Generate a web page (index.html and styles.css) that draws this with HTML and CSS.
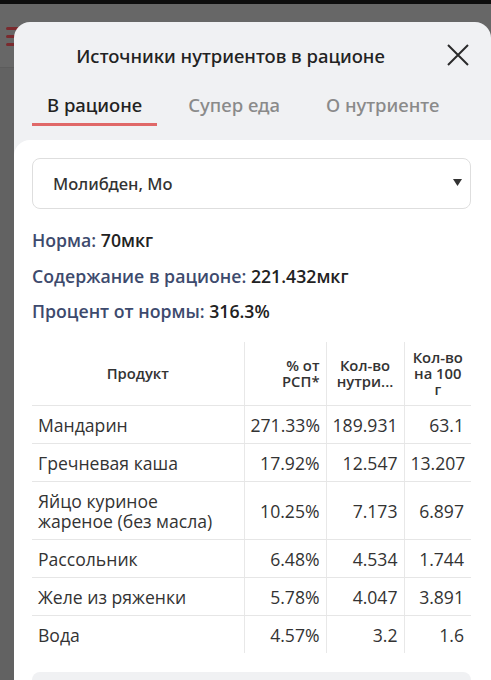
FILE: index.html
```
<!DOCTYPE html>
<html lang="ru">
<head>
<meta charset="utf-8">
<link rel="stylesheet" href="styles.css">
</head>
<body>
<div class="statusbar"></div>
<div class="page-header">
  <div class="burger"><span></span><span></span><span></span></div>
</div>
<div class="page-body"></div>

<div class="modal">
  <div class="modal-head">
    <div class="modal-title">Источники нутриентов в рационе</div>
    <div class="close">
      <svg width="22" height="22" viewBox="0 0 22 22"><path d="M1 1 L21 21 M21 1 L1 21" stroke="#2a2a2a" stroke-width="2" fill="none"/></svg>
    </div>
  </div>
  <div class="tabs">
    <div class="tab active">В рационе</div>
    <div class="tab">Супер еда</div>
    <div class="tab">О нутриенте</div>
  </div>
  <div class="card">
    <div class="select">
      <span>Молибден, Мо</span>
      <svg class="arrow" width="9" height="7" viewBox="0 0 9 7"><path d="M0 0 H9 L4.5 7 Z" fill="#333"/></svg>
    </div>
    <div class="stats">
      <div class="stat"><span class="label">Норма:</span> 70мкг</div>
      <div class="stat"><span class="label">Содержание в рационе:</span> 221.432мкг</div>
      <div class="stat"><span class="label">Процент от нормы:</span> 316.3%</div>
    </div>
    <table class="tbl">
      <colgroup>
        <col class="c1"><col class="c2"><col class="c3"><col class="c4">
      </colgroup>
      <thead>
        <tr>
          <th class="center">Продукт</th>
          <th class="right">% от<br>РСП*</th>
          <th class="center">Кол-во<br>нутри...</th>
          <th class="center">Кол-во<br>на 100<br>г</th>
        </tr>
      </thead>
      <tbody>
        <tr><td>Мандарин</td><td class="num">271.33%</td><td class="num">189.931</td><td class="num">63.1</td></tr>
        <tr><td>Гречневая каша</td><td class="num">17.92%</td><td class="num">12.547</td><td class="num">13.207</td></tr>
        <tr><td>Яйцо куриное<br>жареное (без масла)</td><td class="num">10.25%</td><td class="num">7.173</td><td class="num">6.897</td></tr>
        <tr><td>Рассольник</td><td class="num">6.48%</td><td class="num">4.534</td><td class="num">1.744</td></tr>
        <tr><td>Желе из ряженки</td><td class="num">5.78%</td><td class="num">4.047</td><td class="num">3.891</td></tr>
        <tr><td>Вода</td><td class="num">4.57%</td><td class="num">3.2</td><td class="num">1.6</td></tr>
      </tbody>
    </table>
    <div class="footer-box"></div>
  </div>
</div>
</body>
</html>
```
FILE: styles.css
```
html, body {
  margin: 0;
  padding: 0;
  height: 100%;
  overflow: hidden;
}
body {
  background: #626262;
  font-family: "Noto Sans", "Open Sans", sans-serif;
}
.statusbar {
  height: 4px;
  background: #0e0e0e;
}
.page-header {
  height: 64px;
  background: #676767;
  border-bottom: 1px solid #5c5c5c;
  padding: 23px 0 0 6px;
  box-sizing: border-box;
}
.burger {
  display: flex;
  flex-direction: column;
  gap: 5px;
}
.burger span {
  display: block;
  width: 16px;
  height: 3px;
  border-radius: 2px;
  background: #7a2a2e;
}
.modal {
  position: absolute;
  left: 14px;
  top: 22px;
  width: 477px;
  bottom: 0;
  background: #f0f1f3;
  border-radius: 16px 16px 0 0;
  display: flex;
  flex-direction: column;
  overflow: hidden;
}
.modal-head {
  flex-shrink: 0;
  display: flex;
  align-items: center;
  height: 66px;
}
.modal-title {
  flex: 1;
  text-align: center;
  font-size: 18.5px;
  font-weight: 500;
  color: #222;
}
.close {
  width: 22px;
  height: 22px;
  margin: 0 22px 0 0;
}
.close svg { display: block; }
.tabs {
  flex-shrink: 0;
  display: flex;
  align-items: flex-start;
  gap: 16px;
  padding: 4px 0 0 18px;
  height: 52px;
  box-sizing: border-box;
}
.tab {
  font-size: 18.5px;
  font-weight: 500;
  line-height: 25px;
  color: #8a8a8a;
  padding: 0 15px 9px;
}
.tab.active {
  color: #222;
  padding-bottom: 6px;
  border-bottom: 3px solid #e06868;
}
.card {
  flex: 1 0 auto;
  background: #fff;
  border-radius: 16px 0 0 0;
  padding: 18px 20px 0 18px;
}
.select {
  height: 51px;
  box-sizing: border-box;
  border: 1px solid #dedede;
  border-radius: 8px;
  display: flex;
  align-items: center;
  justify-content: space-between;
  padding: 0 8px 0 20px;
  font-size: 16.6px;
  font-weight: 500;
  color: #333;
}
.arrow { display: block; margin-top: -2px; }
.stats {
  padding-top: 20px;
  display: flex;
  flex-direction: column;
  gap: 13.5px;
}
.stat {
  font-family: "Open Sans", sans-serif;
  font-size: 17.7px;
  font-weight: 600;
  color: #222;
  line-height: 22px;
}
.label { color: #3d4a6d; }
.tbl {
  margin-top: 20px;
  width: 439px;
  table-layout: fixed;
  border-collapse: collapse;
  font-family: "Open Sans", sans-serif;
  color: #333;
}
.c1 { width: 212px; }
.c2 { width: 82px; }
.c3 { width: 78px; }
.c4 { width: 67px; }
.tbl th {
  font-size: 14.8px;
  font-weight: 600;
  line-height: 16px;
  padding: 7px 6px 8px;
  border-right: 1px solid #e8e8e8;
  border-bottom: 1px solid #e6e6e6;
  height: 48px;
  box-sizing: content-box;
}
.tbl td {
  font-size: 17.6px;
  line-height: 20px;
  padding: 9px 6px 8px;
  border-right: 1px solid #e8e8e8;
  border-bottom: 1px solid #e6e6e6;
  white-space: nowrap;
}
.tbl tr > :last-child { border-right: none; }
.tbl tbody tr:last-child td { border-bottom: none; }
.center { text-align: center; }
.right { text-align: right; }
.num { text-align: right; }
.tbl td:last-child { padding-right: 7px; }
.footer-box {
  margin-top: 19px;
  height: 40px;
  background: #f0f1f3;
  border-radius: 8px;
}
```
